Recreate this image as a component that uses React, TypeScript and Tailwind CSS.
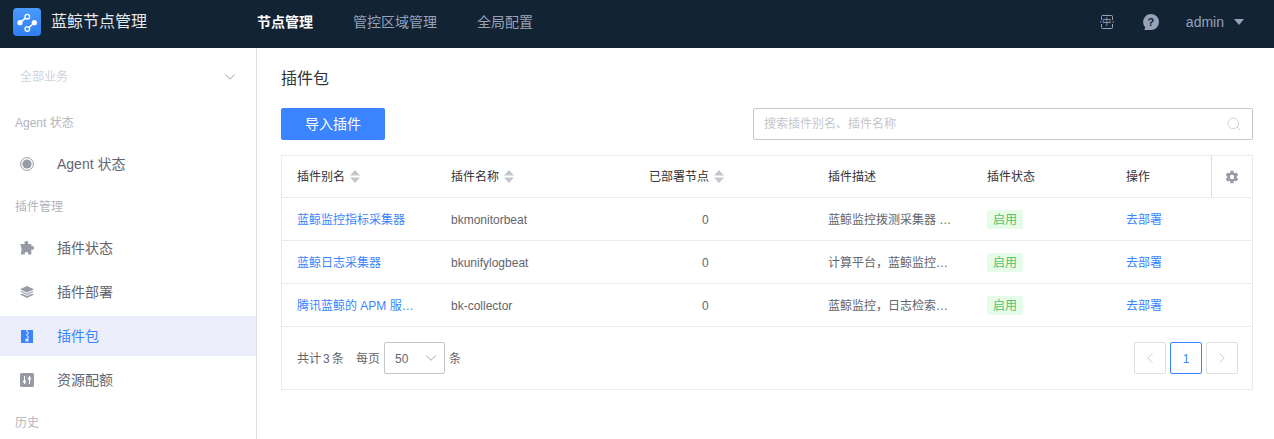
import React from "react";
import { ChevronDown, ChevronLeft, ChevronRight, Search } from "lucide-react";
import { IoSettingsSharp } from "react-icons/io5";

const font = { fontFamily: '"Liberation Sans","Noto Sans CJK SC",sans-serif' };

function Logo() {
  return (
    <svg width="28" height="28" viewBox="0 0 28 28">
      <defs>
        <linearGradient id="lg" x1="0" y1="0" x2="0" y2="1">
          <stop offset="0" stopColor="#4a9bff" />
          <stop offset="1" stopColor="#2f7df0" />
        </linearGradient>
      </defs>
      <rect width="28" height="28" rx="4" fill="url(#lg)" />
      <path d="M7 14.7 L14.3 8.7 M14.3 21 L21.3 14.7" stroke="#fff" strokeWidth="1.5" fill="none" />
      <circle cx="7" cy="14.7" r="2.6" fill="#fff" />
      <circle cx="21.3" cy="14.7" r="2.6" fill="#fff" />
      <circle cx="14.3" cy="8.7" r="2.3" fill="#3f90fa" stroke="#fff" strokeWidth="1.3" />
      <circle cx="14.3" cy="21" r="2.3" fill="#3f90fa" stroke="#fff" strokeWidth="1.3" />
    </svg>
  );
}

function SortIcon() {
  return (
    <svg width="10" height="13" viewBox="0 0 10 13" className="ml-[5px]">
      <path d="M5 0 L10 5.4 H0 Z M0 7.6 H10 L5 13 Z" fill="#c4c6cc" />
    </svg>
  );
}

function RadioIcon() {
  return (
    <svg width="14" height="14" viewBox="0 0 14 14">
      <circle cx="7" cy="7" r="6.4" fill="none" stroke="#979ba5" strokeWidth="1" />
      <circle cx="7" cy="7" r="4.6" fill="#979ba5" />
    </svg>
  );
}

function PuzzleIcon() {
  return (
    <svg width="14" height="14" viewBox="0 0 14 14">
      <path
        d="M4.8 3 C4.2 1.8 4.4 0 6.4 0 C8.4 0 8.6 1.8 8 3 L11.3 3 L11.3 5.3 C12.3 4.8 14 5 14 6.9 C14 8.8 12.3 9 11.3 8.5 L11.3 13.5 L8 13.5 C8.6 12.2 7.9 11 6.5 11 C5.1 11 4.3 12.2 4.9 13.5 L0.8 13.5 L1.6 8.5 L0.4 3 Z"
        fill="#979ba5"
      />
    </svg>
  );
}

function LayersIcon() {
  return (
    <svg width="14" height="12" viewBox="0 0 14 12">
      <path d="M7 0 L14 3.2 L7 6.6 L0 3.2Z" fill="#979ba5" />
      <path d="M0 5.8 L2 4.9 L7 7.4 L12 4.9 L14 5.8 L7 9.2Z" fill="#979ba5" opacity="0.75" />
      <path d="M0 8.6 L2 7.7 L7 10 L12 7.7 L14 8.6 L7 12Z" fill="#979ba5" />
    </svg>
  );
}

function ZipIcon() {
  return (
    <svg width="12" height="13" viewBox="0 0 12 13">
      <rect width="12" height="13" fill="#3a84ff" />
      <path d="M5 0.5h2v1.2H5zM6 2.5h2v1.2H6zM5 4.5h2v1.2H5zM6 6.5h2v1.2H6zM4.5 8.5h3v3h-3z" fill="#dbe8ff" />
    </svg>
  );
}

function SliderIcon() {
  return (
    <svg width="14" height="14" viewBox="0 0 14 14">
      <rect width="14" height="14" rx="1.5" fill="#979ba5" />
      <path d="M4.5 3v8M9.5 3v8" stroke="#fff" strokeWidth="1" />
      <circle cx="4.5" cy="8.5" r="1.5" fill="#fff" />
      <circle cx="9.5" cy="5.5" r="1.5" fill="#fff" />
    </svg>
  );
}

function LangIcon() {
  return (
    <span className="relative flex h-[14px] w-[14px] items-center justify-center">
      <svg width="14" height="14" viewBox="0 0 14 14" className="absolute inset-0">
        <path d="M1.5 5V1.5a1 1 0 0 1 1-1h9a1 1 0 0 1 1 1V5M1.5 9v3.5a1 1 0 0 0 1 1h9a1 1 0 0 0 1-1V9M0 7h1.5M12.5 7H14" fill="none" stroke="#96a2b9" strokeWidth="1" />
      </svg>
      <span className="relative text-[9px] leading-none text-[#96a2b9]">中</span>
    </span>
  );
}

function HelpIcon() {
  return (
    <span className="relative flex h-[16px] w-[16px] items-center justify-center">
      <svg width="16" height="16" viewBox="0 0 16 16" className="absolute inset-0">
        <path d="M8 0a8 8 0 0 1 0 16H1.2L2.3 13.4A8 8 0 0 1 8 0Z" fill="#96a2b9" />
      </svg>
      <span className="relative text-[11px] font-bold leading-none text-[#132334]">?</span>
    </span>
  );
}

function SideItem({ icon, label, active }: { icon: React.ReactNode; label: string; active?: boolean }) {
  return (
    <div className="flex h-[44px] flex-col justify-center">
      <div className={`flex h-[40px] items-center pl-[20px] text-[14px] ${active ? "bg-[#edeefc] text-[#3a84ff]" : "text-[#63656e]"}`}>
        <span className="flex w-[14px] items-center justify-center">{icon}</span>
        <span className="ml-[23px]">{label}</span>
      </div>
    </div>
  );
}

function GroupLabel({ children }: { children: React.ReactNode }) {
  return <div className="flex h-[40px] items-center pl-[15px] pt-[1px] text-[12px] text-[#b2b5bd]">{children}</div>;
}

const cols = "grid grid-cols-[154px_198px_179px_159px_139px_100px_1fr]";

const rows = [
  { alias: "蓝鲸监控指标采集器", name: "bkmonitorbeat", desc: "蓝鲸监控拨测采集器 …" },
  { alias: "蓝鲸日志采集器", name: "bkunifylogbeat", desc: "计算平台，蓝鲸监控…" },
  { alias: "腾讯蓝鲸的 APM 服…", name: "bk-collector", desc: "蓝鲸监控，日志检索…" },
];

function HeadCell({ children, sort }: { children: React.ReactNode; sort?: boolean }) {
  return (
    <div className="flex items-center pl-[15px] text-[#313238]">
      {children}
      {sort && <SortIcon />}
    </div>
  );
}

export default function App() {
  return (
    <div style={font} className="flex h-[439px] w-[1274px] flex-col overflow-hidden bg-white">
      <header className="flex h-[48px] shrink-0 items-center bg-[#122334] pb-[4px] pl-[13px] pr-[30px]">
        <Logo />
        <span className="ml-[10px] text-[16px] text-[#e4e8ef]">蓝鲸节点管理</span>
        <nav className="ml-[110px] flex gap-[40px] text-[14px] text-[#96a2b9]">
          <span className="font-bold text-white">节点管理</span>
          <span>管控区域管理</span>
          <span>全局配置</span>
        </nav>
        <div className="ml-auto flex items-center text-[#96a2b9]">
          <LangIcon />
          <span className="ml-[29px]"><HelpIcon /></span>
          <span className="ml-[27px] text-[14px]">admin</span>
          <svg width="10" height="6" viewBox="0 0 10 6" className="ml-[10px]">
            <path d="M0 0H10L5 6Z" fill="#96a2b9" />
          </svg>
        </div>
      </header>

      <div className="flex min-h-0 flex-1">
        <aside className="w-[257px] shrink-0 border-r border-[#dcdee5]">
          <div className="flex h-[55px] items-center justify-between pl-[20px] pr-[17px] pt-[3px] text-[12px] text-[#cdd3dc]">
            全部业务
            <ChevronDown size={18} className="text-[#979ba5]" strokeWidth={1.3} />
          </div>
          <div className="flex h-[39px] items-center pl-[15px] text-[12px] text-[#b2b5bd]">Agent 状态</div>
          <SideItem icon={<RadioIcon />} label="Agent 状态" />
          <GroupLabel>插件管理</GroupLabel>
          <SideItem icon={<PuzzleIcon />} label="插件状态" />
          <SideItem icon={<LayersIcon />} label="插件部署" />
          <SideItem icon={<ZipIcon />} label="插件包" active />
          <SideItem icon={<SliderIcon />} label="资源配额" />
          <GroupLabel>历史</GroupLabel>
        </aside>

        <main className="min-w-0 flex-1 pl-[24px] pr-[21px]">
          <h1 className="mt-[20px] text-[16px] leading-[22px] text-[#313238]">插件包</h1>
          <div className="mt-[18px] flex items-center justify-between">
            <button className="h-[32px] w-[104px] rounded-[2px] bg-[#3a84ff] text-[14px] text-white">导入插件</button>
            <div className="flex h-[32px] w-[500px] items-center justify-between rounded-[2px] border border-[#c4c6cc] pl-[10px] pr-[10px]">
              <span className="text-[12px] text-[#c4c6cc]">搜索插件别名、插件名称</span>
              <Search size={16} className="text-[#c4c6cc]" strokeWidth={1.1} />
            </div>
          </div>

          <div className="mt-[15px] border border-[#e3ecef] text-[12px]">
            <div className={`${cols} h-[42px] border-b border-[#e3ecef]`}>
              <HeadCell sort>插件别名</HeadCell>
              <HeadCell sort>插件名称</HeadCell>
              <HeadCell sort>已部署节点</HeadCell>
              <HeadCell>插件描述</HeadCell>
              <HeadCell>插件状态</HeadCell>
              <HeadCell>操作</HeadCell>
              <div className="flex items-center justify-center border-l border-[#dcdee5]">
                <IoSettingsSharp size={14} color="#979ba5" />
              </div>
            </div>
            {rows.map((r) => (
              <div key={r.name} className={`${cols} h-[43px] border-b border-[#e3ecef] pt-[1px] text-[#63656e]`}>
                <div className="flex items-center pl-[15px] text-[#3a84ff]">{r.alias}</div>
                <div className="flex items-center pl-[15px]">{r.name}</div>
                <div className="flex items-center pl-[68px]">0</div>
                <div className="flex items-center pl-[15px]">{r.desc}</div>
                <div className="flex items-center pl-[15px]">
                  <span className="flex h-[19px] w-[36px] items-center justify-center rounded-[2px] bg-[#e7fbe9] text-[#4fc26f]">启用</span>
                </div>
                <div className="flex items-center pl-[15px] text-[#3a84ff]">去部署</div>
                <div />
              </div>
            ))}
            <div className="flex h-[62px] items-center justify-between pl-[15px] pr-[14px] text-[#63656e]">
              <div className="flex items-center">
                <span className="flex w-[49px] pt-[1px]">共计<span className="mx-[2px]">3</span>条</span>
                <span className="ml-[10px] pt-[1px]">每页</span>
                <div className="ml-[4px] flex h-[32px] w-[61px] items-center justify-between rounded-[2px] border border-[#c4c6cc] pl-[10px] pr-[4px]">
                  <span className="pt-[1px]">50</span>
                  <ChevronDown size={18} className="text-[#979ba5]" strokeWidth={1.2} />
                </div>
                <span className="ml-[4px] pt-[1px]">条</span>
              </div>
              <div className="flex gap-[4px]">
                <div className="flex h-[32px] w-[32px] items-center justify-center rounded-[2px] border border-[#dcdee5] text-[#c4c6cc]">
                  <ChevronLeft size={18} strokeWidth={1.2} />
                </div>
                <div className="flex h-[32px] w-[32px] items-center justify-center rounded-[2px] border border-[#3a84ff] pt-[1px] text-[#3a84ff]">1</div>
                <div className="flex h-[32px] w-[32px] items-center justify-center rounded-[2px] border border-[#dcdee5] text-[#c4c6cc]">
                  <ChevronRight size={18} strokeWidth={1.2} />
                </div>
              </div>
            </div>
          </div>
        </main>
      </div>
    </div>
  );
}
